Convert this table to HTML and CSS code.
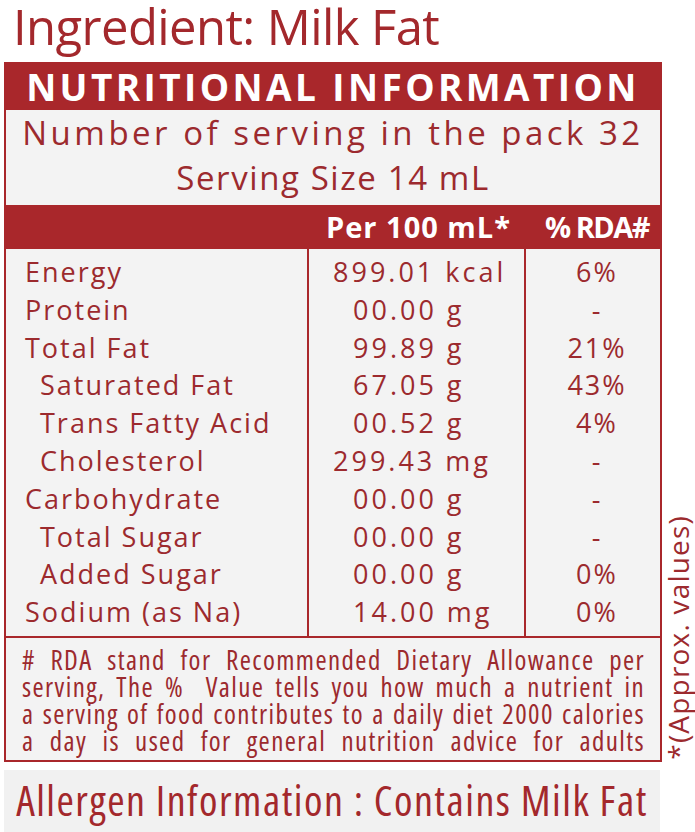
FILE: index.html
```html
<!DOCTYPE html>
<html>
<head>
<meta charset="utf-8">
<link rel="stylesheet" href="styles.css">
</head>
<body>
<div class="page">
  <h1 class="title">Ingredient: Milk Fat</h1>
  <div class="main">
    <div class="box">
      <div class="hdr">NUTRITIONAL INFORMATION</div>
      <div class="serving">
        <div class="srv1">Number of serving in the pack 32</div>
        <div class="srv2">Serving Size 14 mL</div>
      </div>
      <div class="colhdr">
        <div></div>
        <div class="ch-mid">Per 100 mL*</div>
        <div class="ch-rda">% RDA#</div>
      </div>
      <div class="rows">
        <div class="c-name">
          <div class="r">Energy</div>
          <div class="r">Protein</div>
          <div class="r">Total Fat</div>
          <div class="r sub">Saturated Fat</div>
          <div class="r sub">Trans Fatty Acid</div>
          <div class="r sub">Cholesterol</div>
          <div class="r">Carbohydrate</div>
          <div class="r sub">Total Sugar</div>
          <div class="r sub">Added Sugar</div>
          <div class="r">Sodium (as Na)</div>
        </div>
        <div class="c-val">
          <div class="r">899.01 kcal</div>
          <div class="r two">00.00 g</div>
          <div class="r two">99.89 g</div>
          <div class="r two">67.05 g</div>
          <div class="r two">00.52 g</div>
          <div class="r">299.43 mg</div>
          <div class="r two">00.00 g</div>
          <div class="r two">00.00 g</div>
          <div class="r two">00.00 g</div>
          <div class="r two">14.00 mg</div>
        </div>
        <div class="c-rda">
          <div class="r">6%</div>
          <div class="r">-</div>
          <div class="r">21%</div>
          <div class="r">43%</div>
          <div class="r">4%</div>
          <div class="r">-</div>
          <div class="r">-</div>
          <div class="r">-</div>
          <div class="r">0%</div>
          <div class="r">0%</div>
        </div>
      </div>
      <div class="note">
        <p># RDA stand for Recommended Dietary Allowance per</p>
        <p>serving, The %&nbsp; Value tells you how much a nutrient in</p>
        <p>a serving of food contributes to a daily diet 2000 calories</p>
        <p>a day is used for general nutrition advice for adults</p>
      </div>
    </div>
    <div class="side">*(Approx. values)</div>
  </div>
  <div class="allergen">Allergen Information : Contains Milk Fat</div>
</div>
</body>
</html>
```
FILE: styles.css
```css
html, body {
  margin: 0;
  padding: 0;
  background: #ffffff;
}
.page {
  width: 695px;
  height: 832px;
  overflow: hidden;
  font-family: "Open Sans", "DejaVu Sans", sans-serif;
  color: #9c2a2e;
}
.title {
  margin: 0;
  height: 62px;
  padding-left: 13px;
  font-family: "Open Sans", sans-serif;
  font-weight: 500;
  font-size: 49px;
  line-height: 52px;
  color: #a3282c;
  letter-spacing: -0.6px;
  white-space: nowrap;
}
.main {
  display: flex;
  padding-left: 4px;
}
.box {
  width: 654px;
  border: 2px solid #a9272b;
  background: #f3f3f3;
}
.hdr {
  height: 46px;
  background: #a9272b;
  color: #ffffff;
  font-weight: 700;
  font-size: 37px;
  line-height: 46px;
  text-align: center;
  letter-spacing: 3.4px;
  white-space: nowrap;
}
.serving {
  height: 95px;
  text-align: center;
  font-size: 33px;
  line-height: 45px;
  padding-top: 0;
  box-sizing: border-box;
  white-space: nowrap;
}
.srv1 {
  letter-spacing: 3.5px;
}
.srv2 {
  letter-spacing: 1.6px;
}
.colhdr {
  display: grid;
  grid-template-columns: 305px 219px 130px;
  height: 44px;
  background: #a9272b;
  color: #ffffff;
  font-weight: 700;
  font-size: 29px;
  line-height: 44px;
  white-space: nowrap;
}
.ch-mid {
  padding-left: 15px;
  letter-spacing: 1px;
}
.ch-rda {
  padding-left: 15px;
  letter-spacing: -1.5px;
}
.rows {
  display: grid;
  grid-template-columns: 303px 217px 130px;
  font-size: 27px;
  letter-spacing: 2px;
}
.rows > div {
  padding: 4px 0 0;
  height: 387px;
  box-sizing: border-box;
}
.c-name {
  border-right: 2px solid #a9272b;
  padding-left: 19px !important;
}
.c-val {
  border-right: 2px solid #a9272b;
  padding-left: 24px !important;
  letter-spacing: 3px;
}
.c-val .two {
  padding-left: 20px;
}
.c-rda {
  text-align: center;
  padding-left: 12px !important;
}
.r {
  height: 37.8px;
  line-height: 37.8px;
  white-space: pre;
}
.sub {
  padding-left: 15px;
}
.note {
  border-top: 2px solid #a9272b;
  padding: 8px 15px 6px 16px;
  font-size: 27px;
  line-height: 27px;
  letter-spacing: 1.4px;
  font-stretch: 75%;
}
.note p {
  margin: 0;
  text-align: justify;
  text-align-last: justify;
}
.side {
  align-self: flex-end;
  writing-mode: vertical-rl;
  transform: rotate(180deg);
  font-size: 28px;
  letter-spacing: 1.2px;
  line-height: 30px;
  margin-left: 1px;
  padding-top: 2px;
  white-space: nowrap;
  color: #9c2a2e;
}
.allergen {
  margin: 8px 0 0 4px;
  width: 656px;
  height: 64px;
  background: #f1f1f1;
  text-align: center;
  font-size: 42px;
  line-height: 60px;
  font-stretch: 75%;
  color: #a3282c;
  letter-spacing: 1.5px;
  white-space: nowrap;
}
```
